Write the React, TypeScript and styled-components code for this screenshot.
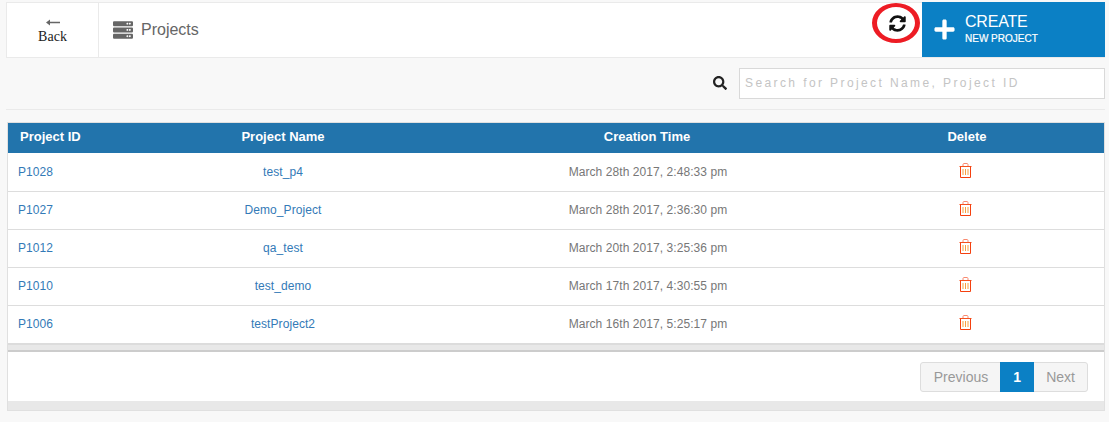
import React from 'react'
import styled, { createGlobalStyle } from 'styled-components'
import { FaPlus, FaSearch, FaServer, FaSyncAlt } from 'react-icons/fa'

const projects = [
  { id: 'P1028', name: 'test_p4', created: 'March 28th 2017, 2:48:33 pm' },
  { id: 'P1027', name: 'Demo_Project', created: 'March 28th 2017, 2:36:30 pm' },
  { id: 'P1012', name: 'qa_test', created: 'March 20th 2017, 3:25:36 pm' },
  { id: 'P1010', name: 'test_demo', created: 'March 17th 2017, 4:30:55 pm' },
  { id: 'P1006', name: 'testProject2', created: 'March 16th 2017, 5:25:17 pm' },
]

const TrashIcon = () => (
  <svg width="13" height="15" viewBox="0 0 13 15" fill="none">
    <path d="M0.5 3.5H12.5" stroke="#f4511e" />
    <path d="M4 3V1.5C4 1 4.4 .5 5 .5H8C8.6 .5 9 1 9 1.5V3" stroke="#f98a70" />
    <path d="M1.5 3.5V14.5H11.5V3.5" stroke="#f4400f" />
    <path d="M4 6V12M6.5 6V12M9 6V12" stroke="#f7a040" />
  </svg>
)

export default function App() {
  return (
    <>
      <GlobalStyle />
      <Page>
        <TopBar>
          <BackCell>
            <BackArrow>
              <svg width="14" height="7" viewBox="0 0 14 7">
                <path d="M0 3.5L4 0.5V2.8H14V4.2H4V6.5Z" fill="#666" />
              </svg>
            </BackArrow>
            <span>Back</span>
          </BackCell>
          <TitleCell>
            <FaServer size={20} color="#666" />
            <Title>Projects</Title>
          </TitleCell>
          <RefreshCell>
            <FaSyncAlt size={17} color="#111" />
            <RedRing />
          </RefreshCell>
          <CreateButton>
            <FaPlus size={23} color="#fff" />
            <CreateText>
              <CreateMain>CREATE</CreateMain>
              <CreateSub>NEW PROJECT</CreateSub>
            </CreateText>
          </CreateButton>
        </TopBar>
        <SearchRow>
          <FaSearch size={14} color="#222" />
          <SearchInput placeholder="Search for Project Name, Project ID" />
        </SearchRow>
        <Card>
          <Table>
            <colgroup>
              <col width="94" />
              <col width="362" />
              <col width="366" />
              <col width="274" />
            </colgroup>
            <thead>
              <tr>
                <HeadCell $left>Project ID</HeadCell>
                <HeadCell>Project Name</HeadCell>
                <HeadCell>Creation Time</HeadCell>
                <HeadCell>Delete</HeadCell>
              </tr>
            </thead>
            <tbody>
              {projects.map((p) => (
                <tr key={p.id}>
                  <IdCell>{p.id}</IdCell>
                  <NameCell>{p.name}</NameCell>
                  <TimeCell>{p.created}</TimeCell>
                  <DeleteCell>
                    <TrashIcon />
                  </DeleteCell>
                </tr>
              ))}
            </tbody>
          </Table>
          <Band />
          <Footer>
            <Pager>
              <PageButton>Previous</PageButton>
              <PageCurrent>1</PageCurrent>
              <PageButton>Next</PageButton>
            </Pager>
          </Footer>
          <FooterStrip />
        </Card>
      </Page>
    </>
  )
}

const GlobalStyle = createGlobalStyle`
  html, body {
    margin: 0;
    padding: 0;
    background: #f8f8f8;
    font-family: 'Liberation Sans', Arial, sans-serif;
  }
`

const Page = styled.div`
  width: 1109px;
  height: 422px;
  padding: 2px 4px 0 6px;
  box-sizing: border-box;
  overflow: hidden;
`

const TopBar = styled.div`
  display: flex;
  height: 56px;
  background: #fff;
  border: 1px solid #eaeaea;
  border-right: none;
  box-sizing: border-box;
`

const BackCell = styled.div`
  width: 92px;
  flex: none;
  display: flex;
  flex-direction: column;
  align-items: center;
  gap: 2px;
  padding-top: 15px;
  box-sizing: border-box;
  border-right: 1px solid #eaeaea;
  font-family: 'Liberation Serif', serif;
  font-size: 14px;
  line-height: 15px;
  color: #222;
`

const BackArrow = styled.span`
  display: flex;
  height: 9px;
  align-items: center;
`

const TitleCell = styled.div`
  display: flex;
  align-items: center;
  gap: 8px;
  padding-left: 14px;
  flex: 1;
  color: #666;
`

const Title = styled.span`
  font-size: 16px;
  color: #666;
`

const RefreshCell = styled.div`
  position: relative;
  width: 48px;
  margin-right: 2px;
  padding-left: 2px;
  box-sizing: border-box;
  display: flex;
  align-items: center;
  justify-content: center;
  height: 40px;
`

const RedRing = styled.div`
  position: absolute;
  left: 0;
  top: 0;
  width: 48px;
  height: 40px;
  box-sizing: border-box;
  border: 4px solid #ed1c24;
  border-left-width: 5px;
  border-right-width: 5px;
  border-radius: 50%;
`

const CreateButton = styled.div`
  width: 183px;
  margin: -1px 0 0;
  flex: none;
  display: flex;
  align-items: center;
  gap: 9px;
  padding-left: 11px;
  box-sizing: border-box;
  background: #0b80c5;
  color: #fff;
`

const CreateText = styled.div`
  display: flex;
  flex-direction: column;
  gap: 2px;
  margin-bottom: 3px;
`

const CreateMain = styled.span`
  font-size: 16px;
  line-height: 18px;
  letter-spacing: -0.2px;
`

const CreateSub = styled.span`
  font-size: 10px;
  line-height: 11px;
  -webkit-text-stroke: 0.2px #fff;
`

const SearchRow = styled.div`
  display: flex;
  align-items: center;
  justify-content: flex-end;
  gap: 12px;
  height: 52px;
  padding-bottom: 1px;
  box-sizing: border-box;
  border-bottom: 1px solid #eaeaea;
  margin-bottom: 12px;
`

const SearchInput = styled.input`
  width: 366px;
  height: 31px;
  box-sizing: border-box;
  border: 1px solid #d9d9d9;
  background: #fff;
  padding: 0 5px;
  font-family: 'Liberation Sans', Arial, sans-serif;
  font-size: 12px;
  letter-spacing: 2.4px;
  outline: none;

  &::placeholder {
    color: #c4c4c4;
    opacity: 1;
  }
`

const Card = styled.div`
  width: 1098px;
  margin-left: 1px;
  box-sizing: border-box;
  border: 1px solid #e0e0e0;
  background: #fff;
`

const Table = styled.table`
  width: 1096px;
  table-layout: fixed;
  border-collapse: collapse;
  font-size: 12px;
  letter-spacing: 0.07px;

  td {
    box-sizing: border-box;
    height: 38px;
  }
`

const HeadCell = styled.th<{ $left?: boolean }>`
  height: 30px;
  padding: 0 0 2px ${(p) => (p.$left ? '12px' : '0')};
  box-sizing: border-box;
  background: #2274ac;
  border-bottom: 1px solid #fff;
  color: #fff;
  font-size: 13px;
  font-weight: bold;
  letter-spacing: 0;
  text-align: ${(p) => (p.$left ? 'left' : 'center')};
`

const IdCell = styled.td`
  padding: 0 0 0 10px;
  border-bottom: 1px solid #ddd;
  color: #337ab7;
`

const NameCell = styled.td`
  padding: 0;
  border-bottom: 1px solid #ddd;
  text-align: center;
  color: #337ab7;
`

const TimeCell = styled.td`
  padding: 0 0 0 2px;
  border-bottom: 1px solid #ddd;
  text-align: center;
  color: #777;
`

const DeleteCell = styled.td`
  padding: 0 4px 0 0;
  border-bottom: 1px solid #ddd;
  text-align: center;
`

const Band = styled.div`
  height: 5px;
  background: #e8e8e8;
  border-top: 2px solid #dcdcdc;
  border-bottom: 2px solid #ccc;
  margin-top: -1px;
`

const Footer = styled.div`
  display: flex;
  justify-content: flex-end;
  align-items: flex-start;
  height: 49px;
  padding: 10px 16px 0 0;
  box-sizing: border-box;
`

const Pager = styled.div`
  display: flex;
  height: 30px;
  box-sizing: border-box;
  border: 1px solid #ddd;
  border-radius: 3px;
  background: #f5f5f5;
  font-size: 14px;
`

const PageButton = styled.div`
  display: flex;
  align-items: center;
  padding: 0 12px;
  color: #999;

  &:first-child {
    padding-left: 13px;
  }
`

const PageCurrent = styled.div`
  display: flex;
  align-items: center;
  justify-content: center;
  width: 34px;
  margin: -1px 0;
  background: #0b80c5;
  color: #fff;
  font-weight: bold;
`

const FooterStrip = styled.div`
  height: 9px;
  background: #e8e8e8;
`
